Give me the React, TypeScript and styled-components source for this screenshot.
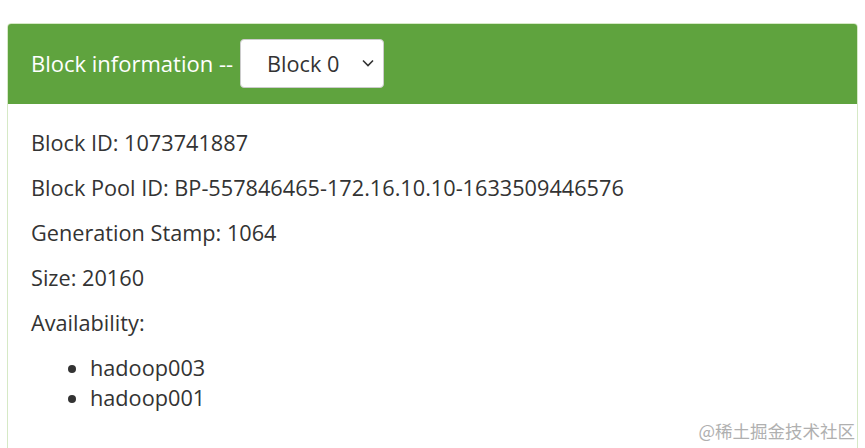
import styled, { createGlobalStyle } from "styled-components"

const GlobalStyle = createGlobalStyle`
  *, *::before, *::after {
    box-sizing: border-box;
  }
  body {
    margin: 0;
    background: #fff;
    font-family: "Open Sans", "Noto Sans", "Noto Sans CJK SC", sans-serif;
    color: #333;
  }
`

const Page = styled.div`
  position: relative;
  height: 448px;
  overflow: hidden;
  padding: 23px 7px 0 7px;
`

const Panel = styled.section`
  border: 1px solid #d6e9c6;
  border-radius: 4px;
  background: #fff;
  height: 460px;
`

const Heading = styled.div`
  display: flex;
  align-items: center;
  height: 80px;
  padding: 0 23px 2px;
  background: #5fa33e;
  color: #fff;
  border-top-left-radius: 3px;
  border-top-right-radius: 3px;
  font-size: 22px;
`

const Title = styled.span`
  margin-right: 7px;
`

const SelectWrap = styled.div`
  position: relative;
  display: flex;
`

const SelectBox = styled.select`
  appearance: none;
  width: 144px;
  height: 49px;
  padding: 0 30px 0 26px;
  border: 1px solid #ccc;
  border-radius: 4px;
  background: #fff;
  color: #333;
  font-family: inherit;
  font-size: 21.7px;
`

const Chevron = styled.svg`
  position: absolute;
  right: 9px;
  top: 19px;
  pointer-events: none;
`

const Body = styled.div`
  padding: 24px 23px;
  font-size: 21.7px;
  line-height: 30px;
`

const Line = styled.p`
  margin: 0 0 15px;
`

const Hosts = styled.ul`
  margin: 0;
  padding-left: 59px;
`

const Watermark = styled.div`
  position: absolute;
  right: 10px;
  bottom: 7px;
  font-family: "Noto Sans CJK SC", sans-serif;
  font-size: 17.5px;
  line-height: 20px;
  color: #b0b0b0;
`

const App = () => {
  return (
    <>
      <GlobalStyle />
      <Page>
        <Panel>
          <Heading>
            <Title>Block information --</Title>
            <SelectWrap>
              <SelectBox defaultValue="0">
                <option value="0">Block 0</option>
              </SelectBox>
              <Chevron width="14" height="10" viewBox="0 0 14 10">
                <path d="M2 2.5 L7 7.5 L12 2.5" fill="none" stroke="#333" strokeWidth="1.6" />
              </Chevron>
            </SelectWrap>
          </Heading>
          <Body>
            <Line>Block ID: 1073741887</Line>
            <Line>Block Pool ID: BP-557846465-172.16.10.10-1633509446576</Line>
            <Line>Generation Stamp: 1064</Line>
            <Line>Size: 20160</Line>
            <Line>Availability:</Line>
            <Hosts>
              <li>hadoop003</li>
              <li>hadoop001</li>
            </Hosts>
          </Body>
        </Panel>
        <Watermark>@稀土掘金技术社区</Watermark>
      </Page>
    </>
  )
}

export default App
